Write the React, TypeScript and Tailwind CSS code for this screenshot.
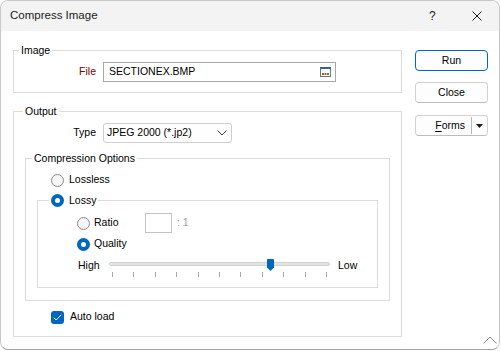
import React from 'react';

// 그룹 상자 (Windows group box 모양)
function Group({
  label,
  className = '',
  legendClass = '',
  children,
}: {
  label: React.ReactNode;
  className?: string;
  legendClass?: string;
  children: React.ReactNode;
}) {
  return (
    <fieldset className={`border border-[#dcdcdc] ${className}`}>
      <legend className={`px-[2px] leading-[17px] ${legendClass}`}>{label}</legend>
      {children}
    </fieldset>
  );
}

function Radio({ checked = false }: { checked?: boolean }) {
  if (checked) {
    return (
      <span className="flex size-[13px] shrink-0 items-center justify-center rounded-full bg-[#0067c0]">
        <span className="size-[5px] rounded-full bg-white" />
      </span>
    );
  }
  return <span className="size-[13px] shrink-0 rounded-full border border-[#8a8a8a] bg-[#f6f6f6]" />;
}

function Button({ children, primary = false, className = '' }: { children: React.ReactNode; primary?: boolean; className?: string }) {
  return (
    <div
      className={`flex h-[21px] w-[73px] items-center justify-center rounded-[4px] border bg-[#fdfdfd] ${
        primary ? 'border-[#0067c0]' : 'border-[#d2d2d2] border-b-[#bcbcbc]'
      } ${className}`}
    >
      {children}
    </div>
  );
}

const TICKS = Array.from({ length: 11 });

export default function App() {
  return (
    <div className="h-[351px] w-[501px] bg-white font-['Liberation_Sans',Arial,sans-serif] text-[10.5px] text-black">
      <div className="relative flex h-[350px] w-[500px] flex-col overflow-hidden rounded-[8px] border border-[#c8c8c8] border-b-[#a2a2a2] bg-white">
        {/* 제목 표시줄 */}
        <div className="flex h-[30px] shrink-0 items-center bg-[#f3f3f3] text-[11.5px] text-[#1b1b1b]">
          <span className="ml-[9px] flex-1">Compress Image</span>
          <span className="w-[7px] text-[12px]">?</span>
          <svg className="ml-[36px] mr-[17px]" width="10" height="10" viewBox="0 0 10 10">
            <path d="M0.5 0.5 L9.5 9.5 M9.5 0.5 L0.5 9.5" stroke="#1b1b1b" strokeWidth="1" />
          </svg>
        </div>

        <div className="flex gap-[13px] pl-[12px] pt-[11px]">
          {/* 왼쪽: 옵션 그룹 */}
          <div className="flex w-[389px] flex-col">
            <Group label="Image" legendClass="ml-[5px]" className="pb-[10px]">
              <div className="mt-[3px] flex items-center">
                <span className="w-[82px] text-right text-[#800000]">File</span>
                <div className="ml-[7px] flex h-[20px] w-[233px] items-center border border-[#a8a8a8] bg-white pl-[5px] pr-[4px]">
                  <span className="flex-1">SECTIONEX.BMP</span>
                  <svg width="11" height="10" viewBox="0 0 11 10">
                    <rect x="0.5" y="0.5" width="10" height="9" fill="#ffffff" stroke="#5d7894" />
                    <rect x="0" y="0" width="11" height="2" fill="#3d6189" />
                    <rect x="2" y="6" width="2" height="2" fill="#9c6a1c" />
                    <rect x="4.5" y="6" width="2" height="2" fill="#9c6a1c" />
                    <rect x="7" y="6" width="2" height="2" fill="#9c6a1c" />
                  </svg>
                </div>
              </div>
            </Group>

            <Group label="Output" legendClass="ml-[9px]" className="mt-[10px] pb-[11px]">
              <div className="mt-[3px] flex items-center">
                <span className="w-[82px] text-right">Type</span>
                <div className="ml-[7px] flex h-[20px] w-[129px] items-center rounded-[3px] border border-[#cfcfcf] bg-[#fefefe] pl-[3px] pr-[4px]">
                  <span className="flex-1">JPEG 2000 (*.jp2)</span>
                  <svg width="10" height="6" viewBox="0 0 10 6">
                    <path d="M0.5 0.5 L5 5 L9.5 0.5" fill="none" stroke="#404040" strokeWidth="1" />
                  </svg>
                </div>
              </div>

              <Group label="Compression Options" legendClass="ml-[6px]" className="mx-[11px] mt-[7px] pb-[12px]">
                <label className="ml-[25px] mt-[5px] flex h-[16px] items-center gap-[5px]">
                  <Radio />
                  <span>Lossless</span>
                </label>

                <Group
                  label={
                    <span className="flex items-center gap-[5px]">
                      <Radio checked />
                      <span>Lossy</span>
                    </span>
                  }
                  legendClass="ml-[11px]"
                  className="mx-[11px] mt-[4px] pb-[10px]"
                >
                  <div className="ml-[39px] mt-[4px] flex h-[20px] items-center">
                    <label className="flex w-[68px] items-center gap-[4px]">
                      <Radio />
                      <span>Ratio</span>
                    </label>
                    <div className="h-[20px] w-[27px] border border-[#c4c4c4] bg-white" />
                    <span className="ml-[5px] text-[#a0a0a0]">: 1</span>
                  </div>
                  <label className="ml-[39px] mt-[3px] flex h-[16px] items-center gap-[4px]">
                    <Radio checked />
                    <span>Quality</span>
                  </label>

                  {/* 품질 슬라이더 */}
                  <div className="ml-[40px] mt-[5px] flex items-start">
                    <span className="w-[31px] leading-[16px]">High</span>
                    <div className="relative mt-[1px] w-[222px]">
                      <div className="mt-[4px] h-[4px] w-[221px] rounded-[2px] border border-[#d3d3d3] bg-[#e3e3e3]" />
                      <div className="mt-[6px] flex justify-between pl-[3px] pr-[4px]">
                        {TICKS.map((_, i) => (
                          <span key={i} className="h-[5px] w-px bg-[#a8a8a8]" />
                        ))}
                      </div>
                      <svg className="absolute left-[158px] top-[1px]" width="7" height="12" viewBox="0 0 7 12">
                        <path d="M0 1 Q0 0 1 0 H6 Q7 0 7 1 V8.5 L3.5 12 L0 8.5 Z" fill="#0067c0" />
                      </svg>
                    </div>
                    <span className="ml-[7px] leading-[16px]">Low</span>
                  </div>
                </Group>
              </Group>

              <label className="ml-[37px] mt-[8px] flex h-[16px] items-center gap-[6px]">
                <span className="flex size-[13px] items-center justify-center rounded-[3px] bg-[#0067c0]">
                  <svg width="9" height="7" viewBox="0 0 9 7">
                    <path d="M0.8 3.6 L3.2 6 L8.2 0.8" fill="none" stroke="#ffffff" strokeWidth="1" />
                  </svg>
                </span>
                <span>Auto load</span>
              </label>
            </Group>
          </div>

          {/* 오른쪽: 버튼 */}
          <div className="mt-[8px] flex flex-col">
            <Button primary>Run</Button>
            <Button className="mt-[11px]">Close</Button>
            <div className="mt-[12px] flex h-[21px] w-[73px] items-center rounded-[4px] border border-[#d2d2d2] border-b-[#bcbcbc] bg-[#fdfdfd]">
              <span className="flex-1 pr-[6px] text-right">
                <span className="underline underline-offset-[2px]">F</span>orms
              </span>
              <span className="h-[17px] w-px bg-[#b8b8b8]" />
              <span className="flex w-[15px] justify-center">
                <svg width="7" height="4" viewBox="0 0 7 4">
                  <path d="M0 0 H7 L3.5 4 Z" fill="#1b1b1b" />
                </svg>
              </span>
            </div>
          </div>
        </div>

        {/* 크기 조절 손잡이 */}
        <svg className="absolute bottom-[5px] right-[2px]" width="14" height="8" viewBox="0 0 14 8">
          <path d="M0.5 7.5 L7 1 L13.5 7.5" fill="none" stroke="#8a8a8a" strokeWidth="1" />
        </svg>
      </div>
    </div>
  );
}
